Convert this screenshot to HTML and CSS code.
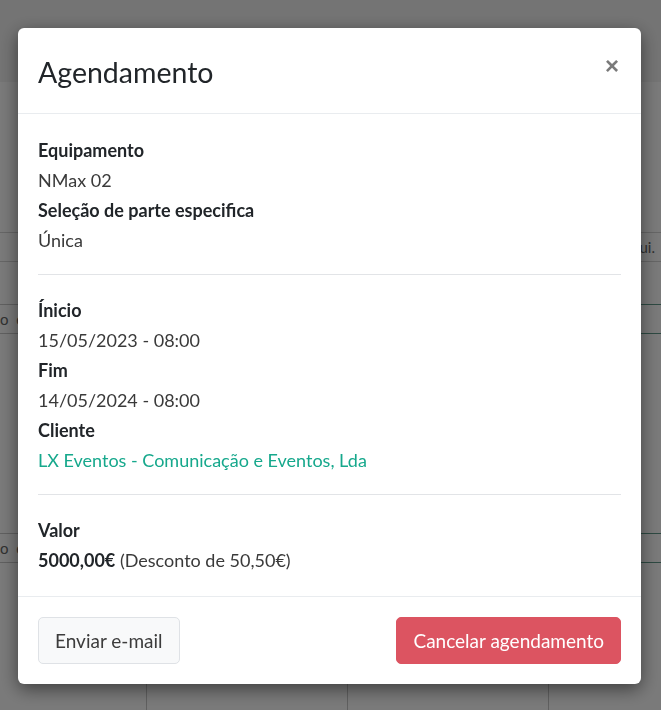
FILE: index.html
```html
<!DOCTYPE html>
<html lang="pt">
<head>
    <meta charset="UTF-8">
    <meta name="viewport" content="width=device-width, initial-scale=1.0">
    <title>Agendamento</title>
    <link rel="stylesheet" href="styles.css">
</head>
<body>

<div id="page">
    <div class="page-top"></div>
    <div class="page-row row-a"><span class="cell-left"></span><span class="cell-right">ui.</span></div>
    <div class="page-row row-b"><span class="cell-left">o e</span><span class="cell-right"></span></div>
    <div class="page-row row-c"><span class="cell-left">o e</span><span class="cell-right"></span></div>
    <div class="page-cols">
        <div class="col"></div>
        <div class="col"></div>
        <div class="col"></div>
    </div>
</div>

<div id="backdrop">
    <div class="modal">
        <div class="modal-header">
            <h4 class="modal-title">Agendamento</h4>
            <button class="close" onclick="closeModal()">&times;</button>
        </div>
        <div class="modal-body">
            <div class="label">Equipamento</div>
            <div class="value">NMax 02</div>
            <div class="label">Seleção de parte especifica</div>
            <div class="value">Única</div>
            <hr>
            <div class="label">Ínicio</div>
            <div class="value">15/05/2023 - 08:00</div>
            <div class="label">Fim</div>
            <div class="value">14/05/2024 - 08:00</div>
            <div class="label">Cliente</div>
            <div class="value"><a href="#">LX Eventos - Comunicação e Eventos, Lda</a></div>
            <hr>
            <div class="label">Valor</div>
            <div class="value"><strong>5000,00€</strong> (Desconto de 50,50€)</div>
        </div>
        <div class="modal-footer">
            <button class="btn btn-light">Enviar e-mail</button>
            <button class="btn btn-danger">Cancelar agendamento</button>
        </div>
    </div>
</div>

<script>
function closeModal() {
    document.getElementById('backdrop').style.display = 'none';
}
</script>
</body>
</html>
```

FILE: styles.css
```css
body {
    margin: 0;
    font-family: Lato, "Noto Sans", sans-serif;
    background-color: #ffffff;
    color: #212529;
    height: 100vh;
    overflow: hidden;
}
#page {
    height: 100vh;
    display: flex;
    flex-direction: column;
}
.page-top {
    height: 82px;
    background-color: #f3f3f3;
    flex-shrink: 0;
}
.page-row {
    display: flex;
    justify-content: space-between;
    align-items: center;
    height: 28px;
    border-top: 1px solid #c8c8c8;
    border-bottom: 1px solid #c8c8c8;
    font-size: 15px;
    color: #666;
    flex-shrink: 0;
}
.row-a {
    margin-top: 150px;
    border-color: #d4d4d4;
}
.row-b {
    margin-top: 42px;
}
.row-c {
    margin-top: 199px;
}
.row-b .cell-right,
.row-c .cell-right {
    align-self: stretch;
    width: 20px;
    margin: -1px 0;
    border-top: 1px solid #5f9a8a;
    border-bottom: 1px solid #5f9a8a;
}
.cell-left {
    letter-spacing: 2px;
}
.cell-right {
    padding-right: 6px;
}
.page-cols {
    flex: 1;
    display: flex;
    padding-left: 146px;
}
.col {
    width: 200px;
    border-left: 1px solid #c8c8c8;
}
.col:last-child {
    flex: 1;
}

#backdrop {
    position: fixed;
    inset: 0;
    background-color: rgba(0, 0, 0, 0.52);
}
.modal {
    width: 623px;
    margin: 28px 0 0 18px;
    background: #ffffff;
    border-radius: 6px;
    box-shadow: 0 5px 18px rgba(0, 0, 0, 0.5);
}
.modal-header {
    display: flex;
    justify-content: space-between;
    align-items: center;
    height: 86px;
    padding: 0 20px;
    box-sizing: border-box;
    border-bottom: 1px solid #e9ecef;
}
.modal-title {
    margin: 0;
    font-size: 28.5px;
    font-weight: 400;
    color: #212529;
    padding-top: 2px;
}
.close {
    border: none;
    background: none;
    padding: 0;
    margin-top: -10px;
    margin-right: 2px;
    font-family: Arial, "Liberation Sans", sans-serif;
    font-size: 24px;
    font-weight: 700;
    color: #7a7a7a;
    cursor: pointer;
}
.modal-body {
    padding: 21px 20px 21px;
    font-size: 18px;
    line-height: 30px;
}
.label {
    font-weight: 700;
    color: #212529;
}
.value {
    color: #3a3a3a;
}
.value a {
    color: #16a88c;
    text-decoration: none;
}
.value strong {
    color: #212529;
}
hr {
    margin: 19px 0 20px;
    border: none;
    border-top: 1px solid #e2e4e7;
}
.modal-footer {
    display: flex;
    justify-content: space-between;
    padding: 20px;
    border-top: 1px solid #e9ecef;
}
.btn {
    height: 47px;
    padding: 0 16px;
    font-family: inherit;
    font-size: 19px;
    border-radius: 5px;
    cursor: pointer;
}
.btn-light {
    background-color: #f8f9fa;
    border: 1px solid #dfe2e6;
    color: #3c3c3c;
}
.btn-danger {
    background-color: #dc5461;
    border: 1px solid #dc5461;
    color: #ffffff;
}
```
